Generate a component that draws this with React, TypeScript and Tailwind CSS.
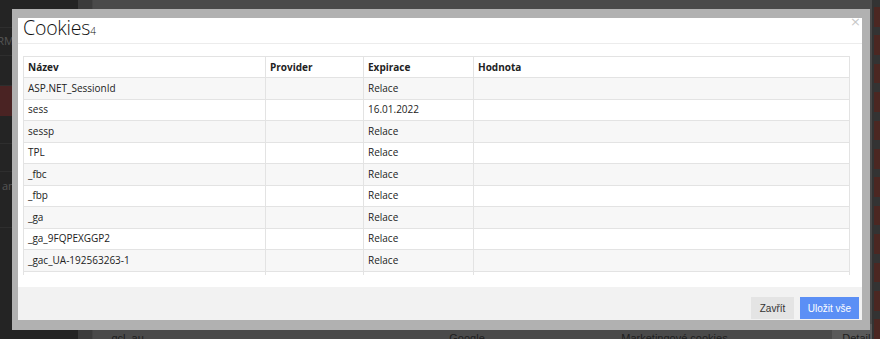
import React from "react";

const rows: [string, string, string, string][] = [
  ["ASP.NET_SessionId", "", "Relace", ""],
  ["sess", "", "16.01.2022", ""],
  ["sessp", "", "Relace", ""],
  ["TPL", "", "Relace", ""],
  ["_fbc", "", "Relace", ""],
  ["_fbp", "", "Relace", ""],
  ["_ga", "", "Relace", ""],
  ["_ga_9FQPEXGGP2", "", "Relace", ""],
  ["_gac_UA-192563263-1", "", "Relace", ""],
  ["_gat", "", "Relace", ""],
];

function Cell({ children, bold }: { children?: React.ReactNode; bold?: boolean }) {
  return (
    <div
      className={
        "flex items-center pl-[4px] border-r border-[#e3e3e3] text-[10px] text-[#222] whitespace-nowrap overflow-hidden " +
        (bold ? "font-bold text-[#111]" : "")
      }
    >
      {children}
    </div>
  );
}

export default function App() {
  const redStrips = Array.from({ length: 12 });
  return (
    <div className="relative w-[880px] h-[339px] overflow-hidden bg-[#4a4a4a] font-['Open_Sans',sans-serif]">
      {/* background page */}
      <div className="flex h-full">
        <div className="w-[78px] h-full bg-[#242424] flex flex-col">
          <div className="h-[28px] border-b border-[#2e2e2e]" />
          <div className="h-[28px] border-b border-[#2e2e2e] flex items-center justify-end pr-[64px] text-[11px] text-[#555]">RM</div>
          <div className="h-[30px] border-b border-[#2e2e2e]" />
          <div className="h-[30px] bg-[#4a2323]" />
          <div className="h-[28px] border-b border-[#2e2e2e]" />
          <div className="h-[28px] border-b border-[#2e2e2e]" />
          <div className="h-[28px] flex items-center pl-[2px] text-[11px] text-[#555]">am</div>
          <div className="h-[28px] border-b border-[#2e2e2e]" />
        </div>
        <div className="w-[16px] h-full bg-[#3b3b3b] border-r border-[#444]" />
        <div className="flex-1 h-full flex flex-col justify-end bg-[#4a4a4a]">
          <div className="h-[28px] mb-[-13px] flex items-center text-[11px] text-[#1e1e1e] font-['Liberation_Sans',sans-serif]">
            <div className="w-[288px] pl-[12px]"><span className="underline">_gcl_au</span></div>
            <div className="w-[162px] pl-[68px]">Google</div>
            <div className="w-[246px] pl-[78px] whitespace-nowrap">Marketingové cookies</div>
            <div className="w-[43px]" />
            <div className="w-[40px] h-full bg-[#5a5a5a] flex items-center pl-[10px]">Detail</div>
          </div>
        </div>
        <div className="w-[8px] h-full bg-[#333] flex flex-col pt-[7px] gap-[8.7px] pl-[2px]">
          {redStrips.map((_, i) => (
            <div key={i} className="h-[20px] bg-[#4b2722]" />
          ))}
        </div>
      </div>

      {/* modal */}
      <div className="absolute left-[12px] top-[9px] w-[858px] h-[321px] bg-[#b1b1b1] pt-[9px] pl-[6px] pr-[8px] pb-[10px]">
        <div className="w-full h-full bg-white flex flex-col">
          <div className="relative h-[26px] border-b border-[#ececec] pl-[5px] flex items-end">
            <div className="flex items-baseline leading-none pb-[6px] text-[#111]">
              <span className="text-[19.5px] font-light tracking-[-0.2px]">Cookies</span>
              <span className="text-[10px] font-light">4</span>
            </div>
            <span className="absolute right-[1px] top-[-3px] text-[13px] leading-none text-[#c8c8c8] font-['DejaVu_Sans',sans-serif]">×</span>
          </div>
          <div className="pt-[12px] pl-[5px] pr-[12px]">
            <div className="h-[219px] overflow-hidden border-l border-t border-[#e3e3e3]">
              <div className="grid grid-cols-[242px_98px_110px_376px] h-[21px] border-b border-[#e3e3e3] bg-white">
                <Cell bold>Název</Cell>
                <Cell bold>Provider</Cell>
                <Cell bold>Expirace</Cell>
                <Cell bold>Hodnota</Cell>
              </div>
              {rows.map((r, i) => (
                <div
                  key={i}
                  className={
                    "grid grid-cols-[242px_98px_110px_376px] h-[21.5px] border-b border-[#e3e3e3] " +
                    (i % 2 === 0 ? "bg-[#f7f7f7]" : "bg-white")
                  }
                >
                  <Cell>{r[0]}</Cell>
                  <Cell>{r[1]}</Cell>
                  <Cell>{r[2]}</Cell>
                  <Cell>{r[3]}</Cell>
                </div>
              ))}
            </div>
          </div>
          <div className="mt-[12px] h-[33px] bg-[#f2f2f2] flex justify-end items-start pt-[10px] pr-[3px] gap-[6px] font-['Liberation_Sans',sans-serif] text-[10px]">
            <button className="w-[43px] h-[22px] bg-[#e4e4e4] text-[#333] flex items-center justify-center">Zavřít</button>
            <button className="w-[59px] h-[22px] bg-[#5b8ff5] text-white flex items-center justify-center">Uložit vše</button>
          </div>
        </div>
      </div>
    </div>
  );
}
